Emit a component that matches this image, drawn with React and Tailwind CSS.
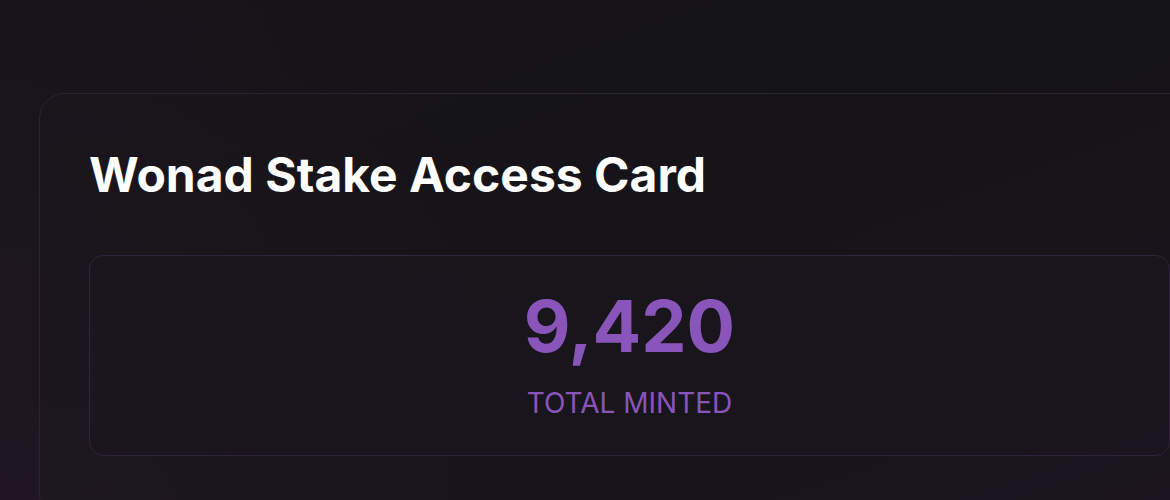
export default function App() {
  return (
    <div className="relative h-[500px] w-full overflow-hidden bg-[linear-gradient(160deg,#17141a_0%,#141316_45%,#17131b_75%,#1e1422_100%)] font-['Inter',sans-serif]">
      <div className="pointer-events-none absolute inset-0 bg-[radial-gradient(circle_at_0%_100%,rgba(90,40,90,0.16),transparent_45%)]" />
      <section className="relative ml-[39px] mt-[93px] w-[1181px] rounded-[26px] border border-[#2a2430] bg-[#1a161c]/40 px-[49px] pt-[52px] pb-16">
        <h1 className="text-[48px] font-bold leading-[58px] text-white">
          Wonad Stake Access Card
        </h1>
        <div className="mt-[51px] flex flex-col items-center rounded-[14px] border border-[#30243a] bg-[#1a151d]/50 pt-[34px] pb-[36px]">
          <div className="text-[72px] font-bold leading-[72px] text-[#8a55ba]">9,420</div>
          <div className="mt-[25px] text-[28px] leading-8 text-[#8a55ba]">TOTAL MINTED</div>
        </div>
      </section>
    </div>
  );
}
